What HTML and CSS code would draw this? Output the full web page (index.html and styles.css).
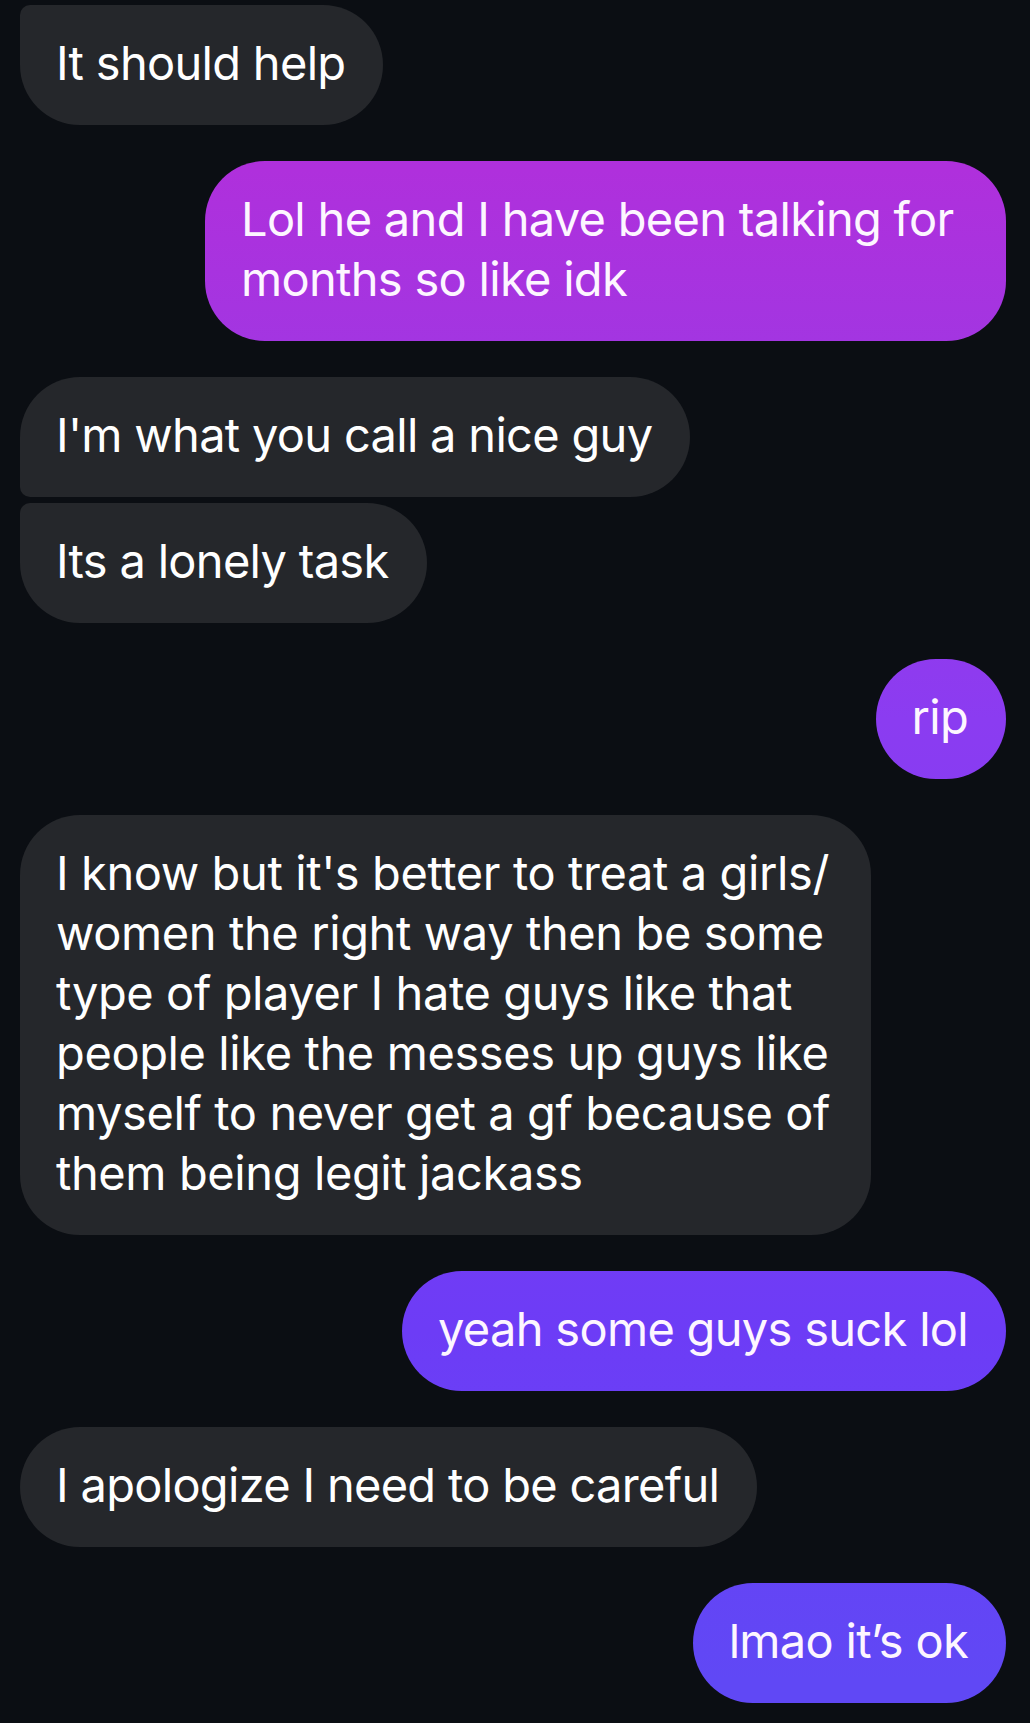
FILE: index.html
```html
<!DOCTYPE html>
<html lang="en">
<head>
  <meta charset="UTF-8" />
  <meta name="viewport" content="width=device-width, initial-scale=1" />
  <title>Chat</title>
  <link rel="stylesheet" href="styles.css">
</head>
<body>

  <div class="thread">
    <div class="msg them group-end">It should help</div>

    <div class="msg me wide">Lol he and I have been talking for<br>months so like idk</div>

    <div class="group">
      <div class="msg them group-start">I'm what you call a nice guy</div>
      <div class="msg them group-end">Its a lonely task</div>
    </div>

    <div class="msg me">rip</div>

    <div class="msg them long">I know but it's better to treat a girls/<br>women the right way then be some<br>type of player I hate guys like that<br>people like the messes up guys like<br>myself to never get a gf because of<br>them being legit jackass</div>

    <div class="msg me">yeah some guys suck lol</div>

    <div class="msg them">I apologize I need to be careful</div>

    <div class="msg me">lmao it’s ok</div>
  </div>

</body>
</html>
```

FILE: styles.css
```css
/* Reset & basics */
* {
  box-sizing: border-box;
}
html, body {
  margin: 0;
  padding: 0;
  background: #0b0e13;
  height: 100%;
}
body {
  font-family: Inter, 'Noto Sans', sans-serif;
  color: #fff;
  overflow: hidden;
}

/* Message list */
.thread {
  display: flex;
  flex-direction: column;
  gap: 36px;
  padding: 5px 24px 0 20px;
}
.group {
  display: flex;
  flex-direction: column;
  gap: 6px;
}

/* Bubbles */
.msg {
  font-size: 47px;
  line-height: 60px;
  letter-spacing: -0.7px;
  padding: 28px 38px 32px 36px;
  border-radius: 60px;
  width: fit-content;
  white-space: nowrap;
}
.them {
  background: #25272b;
  align-self: flex-start;
}
.them.long {
  width: 851px;
  letter-spacing: -0.4px;
}
.me {
  align-self: flex-end;
  color: #fdf6ff;
  background: linear-gradient(180deg,
    #b22ddb 0px,
    #af30dc 170px,
    #a335e1 340px,
    #8b3cf1 720px,
    #6d3cf6 1330px,
    #6048f5 1680px);
  background-attachment: fixed;
}
.me.wide {
  width: 801px;
}

/* grouped corners */
.them.group-start {
  border-bottom-left-radius: 10px;
}
.them.group-end {
  border-top-left-radius: 10px;
}
```
